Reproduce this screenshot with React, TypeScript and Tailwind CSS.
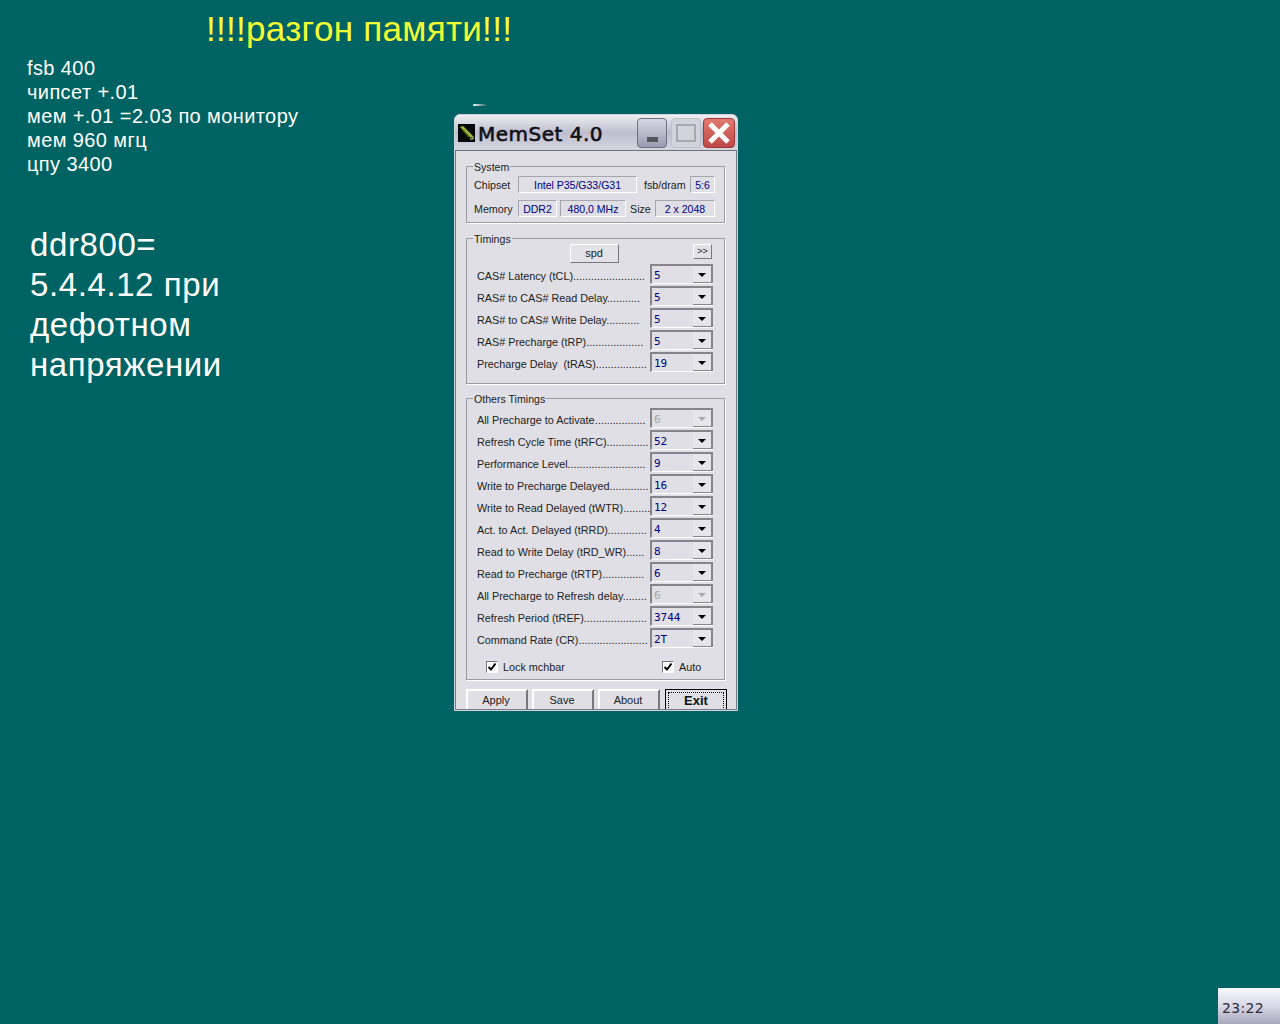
const TIMINGS = [
  {label: "CAS# Latency (tCL)........................", value: "5"},
  {label: "RAS# to CAS# Read Delay...........", value: "5"},
  {label: "RAS# to CAS# Write Delay...........", value: "5"},
  {label: "RAS# Precharge (tRP)...................", value: "5"},
  {label: "Precharge Delay  (tRAS).................", value: "19"},
]

const OTHERS = [
  {label: "All Precharge to Activate.................", value: "6", disabled: true},
  {label: "Refresh Cycle Time (tRFC)..............", value: "52"},
  {label: "Performance Level..........................", value: "9"},
  {label: "Write to Precharge Delayed.............", value: "16"},
  {label: "Write to Read Delayed (tWTR).........", value: "12"},
  {label: "Act. to Act. Delayed (tRRD).............", value: "4"},
  {label: "Read to Write Delay (tRD_WR)......", value: "8"},
  {label: "Read to Precharge (tRTP)..............", value: "6"},
  {label: "All Precharge to Refresh delay........", value: "6", disabled: true},
  {label: "Refresh Period (tREF).....................", value: "3744"},
  {label: "Command Rate (CR).......................", value: "2T"},
]

function Field({width, children}: {width: string; children: React.ReactNode}) {
  return (
    <div className={`${width} h-[17px] flex items-center justify-center border border-t-[#a6a6ae] border-l-[#a6a6ae] border-r-white border-b-white text-[#000080] text-[10.5px]`}>
      {children}
    </div>
  )
}

function Group({title, className, children}: {title: string; className: string; children: React.ReactNode}) {
  return (
    <div className={`relative w-[259px] border border-[#9b9ba3] shadow-[1px_1px_0_#ffffff] ${className}`}>
      <span className="absolute left-[6px] top-[-6px] bg-[#dfdfe5] px-px text-[10.6px] leading-[13px] text-[#222]">{title}</span>
      {children}
    </div>
  )
}

function Combo({label, value, disabled}: {label: string; value: string; disabled?: boolean}) {
  return (
    <div className="flex items-center h-[20px] mb-[2px] pl-[10px]">
      <div className="w-[173px] mt-[4px] overflow-hidden whitespace-pre text-[10.8px] text-[#222]">{label}</div>
      <div className="w-[63px] h-[20px] flex border-t-2 border-l-2 border-b border-t-[#85858b] border-l-[#85858b] border-b-white">
        <div className={`flex-1 pl-[2px] font-['DejaVu_Sans_Mono',monospace] text-[11px] leading-[20px] ${disabled ? "text-[#a8a8ae]" : "text-[#000080]"}`}>
          {value}
        </div>
        <div className="w-[20px] h-[17px] pt-px flex items-center justify-center bg-[#e6e6ea] border-r-2 border-b border-r-[#85858b] border-b-[#85858b]">
          <div className={`w-0 h-0 border-x-[4px] border-x-transparent border-t-[4px] ${disabled ? "border-t-[#a8a8ae]" : "border-t-black"}`}/>
        </div>
      </div>
    </div>
  )
}

function Check({label, className}: {label: string; className: string}) {
  return (
    <div className={`flex items-center ${className}`}>
      <div className="w-[12px] h-[12px] bg-white border border-t-[#77777d] border-l-[#77777d] border-r-white border-b-white flex items-center justify-center">
        <svg width="10" height="10" viewBox="0 0 10 10">
          <path d="M1.5 5 L4 7.5 L8.5 1.5" fill="none" stroke="#000" strokeWidth="2"/>
        </svg>
      </div>
      <span className="ml-[5px] text-[10.8px] text-[#222]">{label}</span>
    </div>
  )
}

function TitleButton({className, children}: {className: string; children: React.ReactNode}) {
  return (
    <div className={`h-[30px] shrink-0 flex items-center justify-center rounded-[4px] ${className}`}>
      {children}
    </div>
  )
}

function MemSetWindow() {
  return (
    <div className="absolute left-[454px] top-[114px] w-[284px] h-[597px] flex flex-col overflow-hidden rounded-t-[6px] border border-[#d4d4de] bg-[#dfdfe5] font-['Liberation_Sans',sans-serif]">
      <div className="h-[36px] shrink-0 flex items-center bg-gradient-to-b from-[#eeeef2] via-[#bebecf] to-[#d6d6e0] border-b border-[#6f6f7a]">
        <svg className="ml-[3px] shrink-0" width="17" height="18" viewBox="0 0 17 18">
          <rect width="17" height="18" fill="#06080a"/>
          <path d="M2 3 L13 14 L15 12 L5 2 Z" fill="#a3b93a"/>
          <path d="M5 6 L11 13" stroke="#4d6a14" strokeWidth="1.5"/>
          <path d="M12 15 L15 15 L15 12" stroke="#dfe6a0" fill="none"/>
        </svg>
        <span className="ml-[3px] mt-[2px] whitespace-nowrap font-['DejaVu_Sans',sans-serif] text-[20px] leading-[24px] text-[#101014] tracking-[0.5px] [-webkit-text-stroke:0.6px_#101014]">MemSet 4.0</span>
        <TitleButton className="ml-auto w-[30px] bg-gradient-to-b from-[#d8d8e2] to-[#9c9cb2] border border-[#6e6e84]">
          <div className="mt-[14px] w-[11px] h-[5px] bg-[#55555f]"/>
        </TitleButton>
        <TitleButton className="ml-[4px] w-[30px] bg-[#d3d3dc] border border-[#c0c0ca]">
          <div className="w-[20px] h-[18px] border-2 border-[#a8a8b2]"/>
        </TitleButton>
        <TitleButton className="ml-[2px] mr-[2px] w-[32px] bg-gradient-to-b from-[#e07a70] to-[#bf4848] border border-[#a03a3a]">
          <svg width="26" height="26" viewBox="0 0 26 26">
            <path d="M4 4 L22 22 M22 4 L4 22" stroke="#fff" strokeWidth="5"/>
          </svg>
        </TitleButton>
      </div>

      <div className="flex-1 min-h-0 pl-[10px] pt-[15px] overflow-hidden border-x border-b border-[#7a7a86]">
        <Group title="System" className="h-[57px] pt-[9px] pl-[7px] text-[10.7px] leading-[16px] text-[#222]">
          <div className="flex items-center h-[17px]">
            <span className="w-[44px] mt-[1px]">Chipset</span>
            <Field width="w-[119px]">Intel P35/G33/G31</Field>
            <span className="ml-[7px] w-[46px] mt-[1px]">fsb/dram</span>
            <Field width="w-[25px]">5:6</Field>
          </div>
          <div className="flex items-center h-[17px] mt-[7px]">
            <span className="w-[44px] mt-[1px]">Memory</span>
            <Field width="w-[39px]">DDR2</Field>
            <div className="w-[3px]"/>
            <Field width="w-[66px]">480,0 MHz</Field>
            <span className="ml-[4px] w-[25px] mt-[1px]">Size</span>
            <Field width="w-[60px]">2 x 2048</Field>
          </div>
        </Group>

        <Group title="Timings" className="h-[146px] mt-[15px] pt-[5px]">
          <div className="flex h-[20px] pl-[103px]">
            <div className="w-[49px] h-[19px] pb-px pr-px flex items-center justify-center bg-[#e2e2e7] border border-t-white border-l-white border-r-[#77777d] border-b-[#77777d] text-[11px] text-[#222]">spd</div>
            <div className="ml-[74px] w-[19px] h-[15px] flex items-center justify-center bg-[#e2e2e7] border border-t-white border-l-white border-r-[#77777d] border-b-[#77777d] text-[9px] text-[#222]">&gt;&gt;</div>
          </div>
          {TIMINGS.map((row) => (
            <Combo key={row.label} {...row}/>
          ))}
        </Group>

        <Group title="Others Timings" className="h-[282px] mt-[14px] pt-[9px]">
          {OTHERS.map((row) => (
            <Combo key={row.label} {...row}/>
          ))}
          <div className="flex mt-[11px]">
            <Check label="Lock mchbar" className="ml-[19px] w-[176px]"/>
            <Check label="Auto" className=""/>
          </div>
        </Group>

        <div className="flex mt-[9px]">
          {["Apply", "Save", "About"].map((name) => (
            <div key={name} className="w-[62px] h-[30px] mr-[4px] pt-[1px] pr-[2px] text-center bg-[#dfdfe5] border-t-2 border-l-2 border-r-2 border-t-white border-l-white border-r-[#77777d] text-[11px] text-[#222]">
              {name}
            </div>
          ))}
          <div className="ml-px w-[62px] h-[30px] border border-black p-[2px]">
            <div className="h-full text-center border border-dotted border-black font-bold text-[13px] leading-[15px] text-[#111]">Exit</div>
          </div>
        </div>
      </div>
    </div>
  )
}

export default function App() {
  return (
    <div className="relative w-[1280px] h-[1024px] overflow-hidden bg-[#006363] font-['Liberation_Sans',sans-serif] text-white">
      <h1 className="pl-[206px] pt-[10px] whitespace-nowrap text-[35px] leading-[38px] tracking-[0.3px] text-[#f4ff33]">!!!!разгон памяти!!!</h1>

      <div className="pl-[27px] pt-[8px] text-[20px] leading-[24px] tracking-[0.4px]">
        <div>fsb 400</div>
        <div>чипсет +.01</div>
        <div>мем +.01 =2.03 по монитору</div>
        <div>мем 960 мгц</div>
        <div>цпу 3400</div>
      </div>

      <div className="pl-[30px] pt-[49px] text-[33px] leading-[40px] tracking-[0.6px]">
        <div>ddr800=</div>
        <div>5.4.4.12 при</div>
        <div>дефотном</div>
        <div>напряжении</div>
      </div>

      <div className="absolute left-[473px] top-[104px] w-[14px] h-[2px] rounded-full bg-gradient-to-r from-white to-[#006363]"/>

      <MemSetWindow/>

      <div className="absolute right-0 bottom-0 w-[62px] h-[36px] flex items-end pl-[4px] pb-[7px] bg-gradient-to-b from-[#f8f8fc] via-[#d8d8e8] to-[#a8a8bc] font-['DejaVu_Sans',sans-serif] text-[14px] leading-[18px] tracking-[0.3px] text-[#2c2c38]">
        23:22
      </div>
    </div>
  )
}
